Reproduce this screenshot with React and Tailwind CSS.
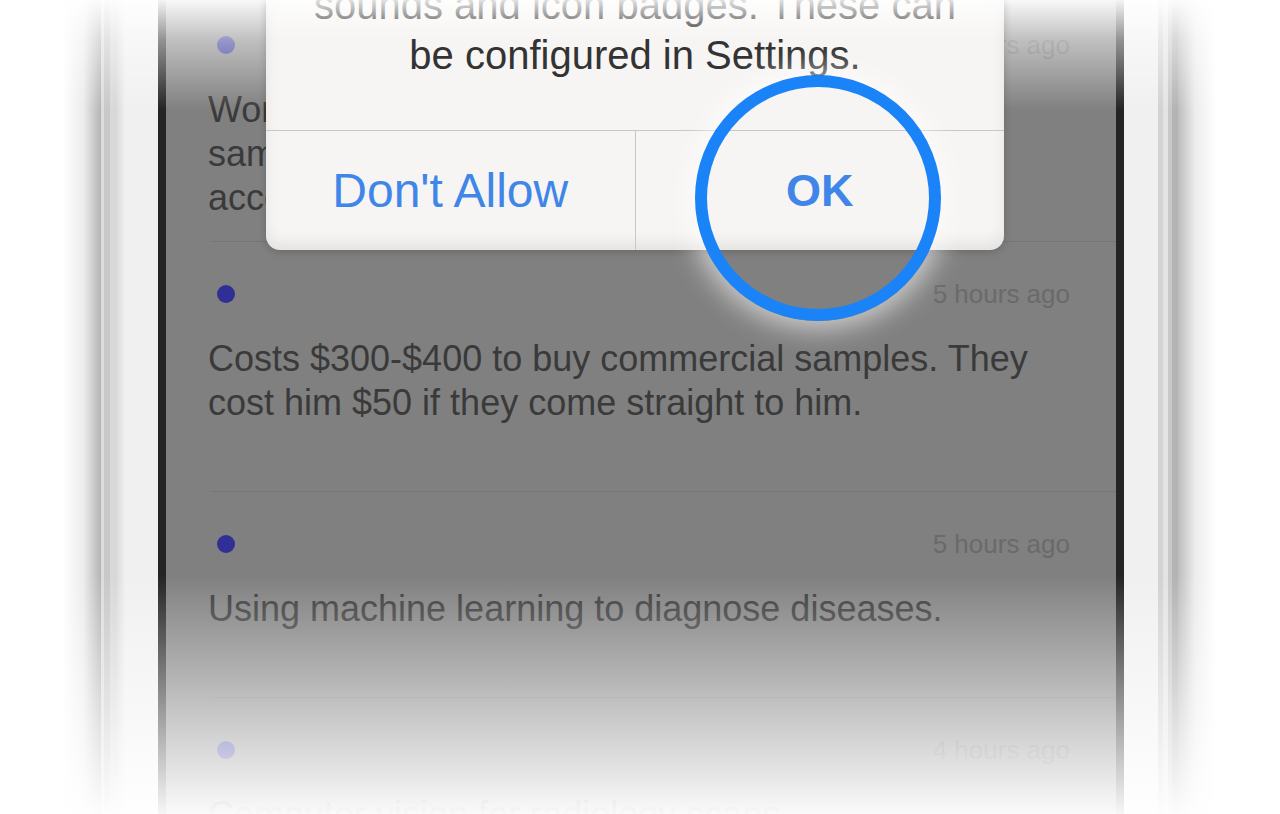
const FONT = { fontFamily: '"Liberation Sans", Arial, sans-serif' };

const notes = [
  {
    id: 1,
    time: "6 hours ago",
    lines: [
      "Works with a factory that makes the same",
      "samples for less and ships them directly,",
      "according to his last supplier.",
    ],
    cls: "pt-[37px] pb-[21px]",
  },
  {
    id: 2,
    time: "5 hours ago",
    text: "Costs $300-$400 to buy commercial samples. They cost him $50 if they come straight to him.",
    cls: "pt-[37px] pb-[66px]",
  },
  {
    id: 3,
    time: "5 hours ago",
    text: "Using machine learning to diagnose diseases.",
    cls: "pt-[37px] pb-[66px]",
  },
  {
    id: 4,
    time: "4 hours ago",
    text: "Computer vision for radiology scans.",
    cls: "pt-[37px] pb-[66px]",
  },
];

const NoteRow = ({ note }) => (
  <div className={`ml-[44px] pr-[46px] border-b border-[#767676] ${note.cls}`}>
    <div className="flex items-center justify-between h-[30px]">
      <span className="ml-[7px] w-[18px] h-[18px] rounded-full bg-[#2f2f95]" />
      <span className="text-[26px] text-[#6a6a6a]">{note.time}</span>
    </div>
    <div className="-ml-[2px] mt-[28px] text-[36px] leading-[44px] text-[#3a3a3a]">
      {note.lines
        ? note.lines.map((l) => (
            <div key={l} className="whitespace-nowrap overflow-hidden">
              {l}
            </div>
          ))
        : note.text}
    </div>
  </div>
);

export default function App() {
  return (
    <div className="relative w-full h-[814px] overflow-hidden bg-white flex" style={FONT}>
      {/* left bezel */}
      <div className="w-[62px] shrink-0" />
      <div className="w-[39px] shrink-0 bg-[linear-gradient(to_right,#ffffff,#ececec_55%,#b4b4b4)]" />
      <div className="w-[3px] shrink-0 bg-[#dcdcdc]" />
      <div className="w-[6px] shrink-0 bg-[#c8c8c8]" />
      <div className="w-[7px] shrink-0 bg-[#d8d8d8]" />
      <div className="w-[8px] shrink-0 bg-[linear-gradient(to_right,#dcdcdc,#efefef)]" />
      <div className="w-[33px] shrink-0 bg-[#f0f0f0]" />
      <div className="w-[8px] shrink-0 bg-[#242424]" />

      {/* screen */}
      <div className="w-[950px] shrink-0 bg-[#808080] overflow-hidden">
        <div className="-mt-[7px]">
          {notes.map((n) => (
            <NoteRow key={n.id} note={n} />
          ))}
        </div>
      </div>

      {/* right bezel */}
      <div className="w-[8px] shrink-0 bg-[#242424]" />
      <div className="w-[34px] shrink-0 bg-[#f0f0f0]" />
      <div className="w-[5px] shrink-0 bg-[#d2d2d2]" />
      <div className="w-[5px] shrink-0 bg-[#e3e3e3]" />
      <div className="w-[4px] shrink-0 bg-[#c8c8c8]" />
      <div className="w-[6px] shrink-0 bg-[#b4b4b4]" />
      <div className="w-[38px] shrink-0 bg-[linear-gradient(to_right,#bcbcbc,#ececec_45%,#ffffff)]" />
      <div className="flex-1" />

      {/* top and bottom fade */}
      <div className="absolute inset-0 pointer-events-none bg-[linear-gradient(to_bottom,rgba(255,255,255,0.95)_0px,rgba(255,255,255,0.5)_40px,rgba(255,255,255,0)_110px,rgba(255,255,255,0)_575px,rgba(255,255,255,0.96)_814px)]" />

      {/* alert */}
      <div className="absolute left-[266px] top-0 w-[738px] h-[250px] flex flex-col bg-[#f7f5f3] rounded-b-[14px] overflow-hidden shadow-[0_2px_8px_rgba(0,0,0,0.18),inset_0_-8px_14px_rgba(0,0,0,0.07)]">
        <div className="h-[130px] flex flex-col justify-end items-center pb-[50px] text-[40px] leading-[50px] text-[#333]">
          <div className="whitespace-nowrap">Notifications may include alerts,</div>
          <div className="whitespace-nowrap">sounds and icon badges. These can</div>
          <div className="whitespace-nowrap">be configured in Settings.</div>
        </div>
        <div className="flex-1 flex border-t border-[#c9c7c5]">
          <div className="flex-1 flex items-center justify-center text-[48px] text-[#3f86e8]">
            Don't Allow
          </div>
          <div className="flex-1 flex items-center justify-center border-l border-[#c9c7c5] text-[45px] font-bold text-[#3f86e8]">
            OK
          </div>
        </div>
        <div className="absolute left-0 right-0 top-0 h-[40px] bg-[linear-gradient(to_bottom,rgba(255,255,255,0.85),rgba(255,255,255,0))]" />
      </div>

      {/* highlight ring */}
      <div className="absolute left-[695px] top-[75px] w-[246px] h-[246px] rounded-full border-[12px] border-[#1a83f8] shadow-[0_0_26px_8px_rgba(255,255,255,0.6)]" />
    </div>
  );
}
